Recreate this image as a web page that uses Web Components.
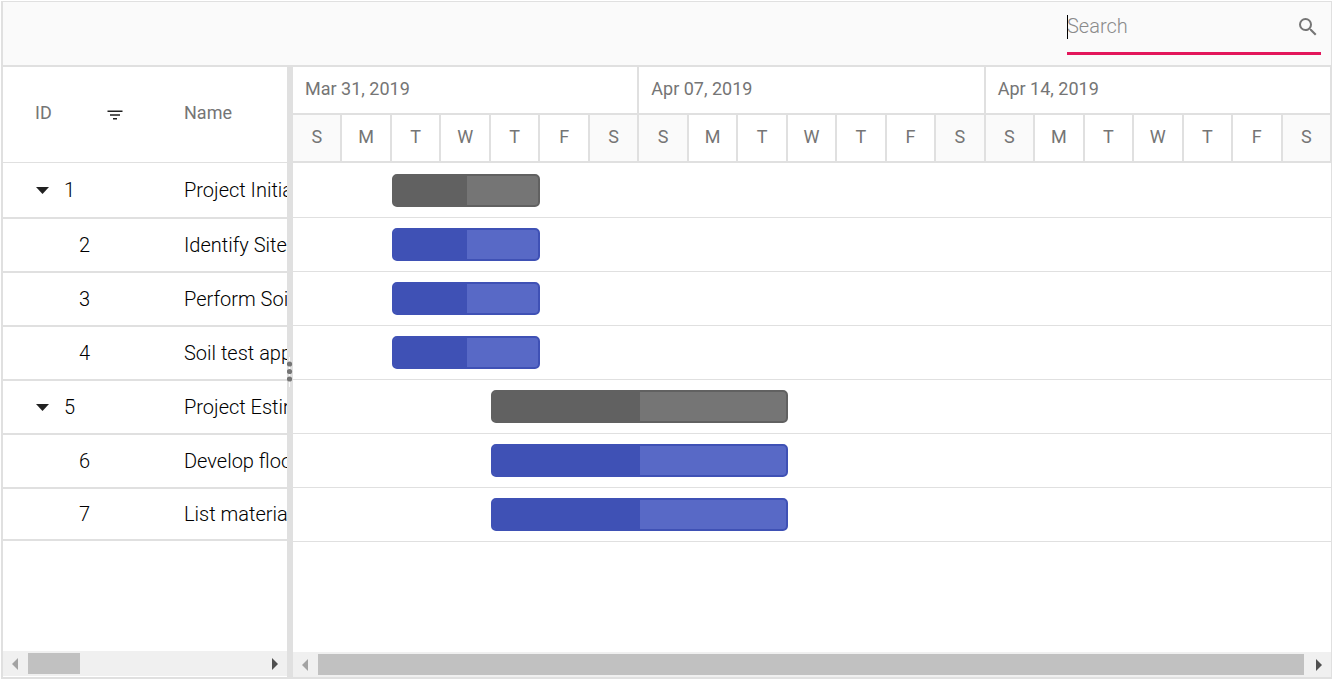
<!DOCTYPE html>
<html lang="en">
<head>
<meta charset="utf-8">
<meta name="viewport" content="width=device-width, initial-scale=1">
<title>Project schedule</title>
<style>
  body { margin: 0; background: #fff; font-family: Roboto, "Liberation Sans", sans-serif; }
</style>
</head>
<body>
<gantt-app></gantt-app>

<template id="gantt-app">
  <style>
    :host {
      --line: #e0e0e0;
      display: flex; flex-direction: column; box-sizing: border-box;
      min-height: calc(100vh - 2px); margin: 1px;
      border: solid var(--line); border-width: 1px 0 2px 2px;
      color: #757575;
    }
    main { flex: 1; display: flex; min-height: 0; }
    task-grid { flex: 0 0 284px; }
    gantt-chart { flex: 1; min-width: 0; }
  </style>
  <gantt-toolbar><search-box label="Search"></search-box></gantt-toolbar>
  <main>
    <task-grid></task-grid>
    <pane-splitter></pane-splitter>
    <gantt-chart></gantt-chart>
  </main>
</template>

<template id="gantt-toolbar">
  <style>
    :host {
      display: flex; justify-content: flex-end; box-sizing: border-box; height: 65px;
      padding-right: 10px; background: #fafafa;
      border-right: 1px solid var(--line); border-bottom: 2px solid var(--line);
    }
  </style>
  <slot></slot>
</template>

<template id="search-box">
  <style>
    :host {
      display: flex; align-items: center; position: relative; box-sizing: border-box;
      width: 254px; height: 53px; border-bottom: 3px solid #e3165b;
    }
    input {
      flex: 1; min-width: 0; height: 48px; padding: 0 0 2px; box-sizing: border-box; border: 0; outline: 0; background: none;
      font: 300 20px/24px Roboto, "Liberation Sans", sans-serif; color: #212121;
    }
    input::placeholder { color: #8a8a8a; opacity: 1; }
    button { display: flex; padding: 0 1px 0 0; border: 0; background: none; color: #757575; }
    .caret { position: absolute; left: 0; top: 13px; width: 1px; height: 24px; background: #000; }
  </style>
  <input type="text">
  <span class="caret"></span>
  <button type="button" aria-label="Run search">
    <svg width="24" height="24" viewBox="0 0 24 24" fill="currentColor"><path d="M15.5 14h-.79l-.28-.27A6.47 6.47 0 0 0 16 9.5 6.5 6.5 0 1 0 9.500 16c1.610 0 3.090-.59 4.230-1.570l.27.28v.79l5 4.990L20.490 19l-4.990-5zm-6 0C7.010 14 5 11.990 5 9.500S7.010 5 9.500 5 14 7.010 14 9.500 11.990 14 9.500 14z"/></svg>
  </button>
</template>

<template id="task-grid">
  <style>
    :host { display: flex; flex-direction: column; overflow: hidden; padding-bottom: 1px; }
    .rows { flex: 1; overflow: hidden; }
    table { width: 560px; table-layout: fixed; border-collapse: separate; border-spacing: 0; }
    .id { width: 149px; }
    th, td { box-sizing: border-box; padding: 0 0 0 32px; text-align: left; white-space: nowrap; }
    th { height: 96px; padding-bottom: 4px; border-bottom: 1px solid var(--line); font-size: 18px; line-height: 24px; font-weight: 400; }
    td { height: 54px; border-bottom: 2px solid var(--line); font-size: 20px; line-height: 24px; font-weight: 300; color: #000; }
    tbody tr:first-child td { height: 56px; }
    tbody tr:last-child td { height: 52px; }
    .head, .cell { display: flex; align-items: center; }
    .head { justify-content: space-between; padding-right: 29px; }
    .head button { display: flex; padding: 4px 0 0; border: 0; background: none; color: #212121; }
    .cell button { display: flex; width: 29px; padding: 0 0 0 1px; border: 0; background: none; color: #212121; }
    .child { padding-left: 44px; }
  </style>
  <div class="rows">
    <table>
      <colgroup><col class="id"><col></colgroup>
      <thead>
        <tr>
          <th scope="col"><div class="head">ID
            <button type="button" aria-label="Filter by ID"><svg width="16" height="10" viewBox="0 0 16 10" fill="currentColor"><path d="M0.500 0.500h15v1.500h-15zM3 4.300h10v1.500h-10zM6 8h4v1.500h-4z"/></svg></button>
          </div></th>
          <th scope="col">Name</th>
        </tr>
      </thead>
      <tbody></tbody>
    </table>
  </div>
  <scroll-bar thumb="52px"></scroll-bar>
</template>

<template id="pane-splitter">
  <style>
    :host { display: flex; align-items: center; flex: 0 0 6px; background: var(--line); }
  </style>
  <svg width="6" height="30" viewBox="0 0 6 30"><path d="M2.500 0v30" stroke="#fafafa"/><g fill="#757575"><circle cx="2.500" cy="7" r="2.600"/><circle cx="2.500" cy="14.500" r="2.600"/><circle cx="2.500" cy="22" r="2.600"/></g></svg>
</template>

<template id="gantt-chart">
  <style>
    :host { display: flex; flex-direction: column; }
    .weeks, .days, .row { display: grid; }
    .weeks { grid-template-columns: repeat(3, 1fr); }
    .days, .row { grid-template-columns: repeat(21, 1fr); }
    .weeks > div, .days > div {
      box-sizing: border-box; height: 48px; font-size: 18px; line-height: 44px; font-weight: 400;
      border: solid var(--line); border-width: 0 2px 2px 0;
    }
    .weeks > div { padding-left: 12px; }
    .days > div { text-align: center; }
    .days > .off { background: #fafafa; }
    .body { flex: 1; padding-top: 1px; border-right: 1px solid var(--line); }
    .row { box-sizing: border-box; height: 54px; padding-top: 10px; margin-right: -1px; border-bottom: 1px solid var(--line); }
    scroll-bar { border-right: 1px solid var(--line); }
  </style>
  <div class="weeks"></div>
  <div class="days"></div>
  <div class="body"></div>
  <scroll-bar thumb="100%"></scroll-bar>
</template>

<template id="task-bar">
  <style>
    :host {
      display: block; box-sizing: border-box; height: 33px; overflow: hidden;
      border: 2px solid #3f51b5; border-radius: 5px; background: #5869c6;
    }
    :host([summary]) { border-color: #616161; background: #757575; }
    div { box-sizing: content-box; height: 100%; padding-right: 1px; background: #3f51b5; }
    :host([summary]) div { background: #616161; }
  </style>
  <div></div>
</template>

<template id="scroll-bar">
  <style>
    :host { display: flex; align-items: center; height: 25px; background: #f0f0f0; }
    button { flex: none; display: flex; justify-content: center; box-sizing: border-box; width: 25px; padding: 0; border: 0; background: none; color: #505050; }
    button:first-of-type { padding-right: 1px; color: #a3a3a3; }
    .track { flex: 1; min-width: 0; padding-right: 2px; }
    .thumb { height: 21px; background: #c1c1c1; }
  </style>
  <button type="button" aria-label="Scroll left"><svg width="6" height="12" viewBox="0 0 6 12"><path fill="currentColor" d="M6 0v12L0 6z"/></svg></button>
  <div class="track"><div class="thumb"></div></div>
  <button type="button" aria-label="Scroll right"><svg width="6" height="12" viewBox="0 0 6 12"><path fill="currentColor" d="M0 0v12l6-6z"/></svg></button>
</template>

<script>
  const TASKS = [
    { id: 1, name: 'Project Initiation', summary: true, start: 2, days: 3, progress: 50 },
    { id: 2, name: 'Identify Site location', start: 2, days: 3, progress: 50 },
    { id: 3, name: 'Perform Soil test', start: 2, days: 3, progress: 50 },
    { id: 4, name: 'Soil test approval', start: 2, days: 3, progress: 50 },
    { id: 5, name: 'Project Estimation', summary: true, start: 4, days: 6, progress: 50 },
    { id: 6, name: 'Develop floor plan for estimation', start: 4, days: 6, progress: 50 },
    { id: 7, name: 'List materials', start: 4, days: 6, progress: 50 }
  ];
  const WEEKS = ['Mar 31, 2019', 'Apr 07, 2019', 'Apr 14, 2019'];

  class Templated extends HTMLElement {
    constructor() {
      super();
      const template = document.getElementById(this.localName);
      this.attachShadow({ mode: 'open' }).append(template.content.cloneNode(true));
    }
    $(selector) { return this.shadowRoot.querySelector(selector); }
  }

  class GanttApp extends Templated {}
  class GanttToolbar extends Templated {}
  class PaneSplitter extends Templated {}

  class SearchBox extends Templated {
    connectedCallback() {
      const input = this.$('input');
      input.placeholder = this.getAttribute('label');
      input.setAttribute('aria-label', this.getAttribute('label'));
    }
  }

  class ScrollBar extends Templated {
    connectedCallback() { this.$('.thumb').style.width = this.getAttribute('thumb'); }
  }

  class TaskBar extends Templated {
    connectedCallback() { this.$('div').style.width = this.getAttribute('progress') + '%'; }
  }

  class TaskGrid extends Templated {
    connectedCallback() {
      const arrow = '<button type="button" aria-label="Collapse"><svg width="13" height="7" viewBox="0 0 13 7"><path fill="currentColor" d="M0 0h13L6.500 7z"/></svg></button>';
      this.$('tbody').innerHTML = TASKS.map(t => `<tr>
        <td><div class="cell ${t.summary ? '' : 'child'}">${t.summary ? arrow : ''}<span>${t.id}</span></div></td>
        <td>${t.name}</td></tr>`).join('');
    }
  }

  class GanttChart extends Templated {
    connectedCallback() {
      this.$('.weeks').innerHTML = WEEKS.map(w => `<div>${w}</div>`).join('');
      this.$('.days').innerHTML = WEEKS.map(() => [...'SMTWTFS'].map(d =>
        `<div${d === 'S' ? ' class="off"' : ''}>${d}</div>`).join('')).join('');
      this.$('.body').innerHTML = TASKS.map(t => `<div class="row">
        <task-bar ${t.summary ? 'summary' : ''} progress="${t.progress}"
          style="grid-column: ${t.start + 1} / span ${t.days}"></task-bar></div>`).join('');
    }
  }

  customElements.define('scroll-bar', ScrollBar);
  customElements.define('task-bar', TaskBar);
  customElements.define('search-box', SearchBox);
  customElements.define('gantt-toolbar', GanttToolbar);
  customElements.define('pane-splitter', PaneSplitter);
  customElements.define('task-grid', TaskGrid);
  customElements.define('gantt-chart', GanttChart);
  customElements.define('gantt-app', GanttApp);
</script>
</body>
</html>
